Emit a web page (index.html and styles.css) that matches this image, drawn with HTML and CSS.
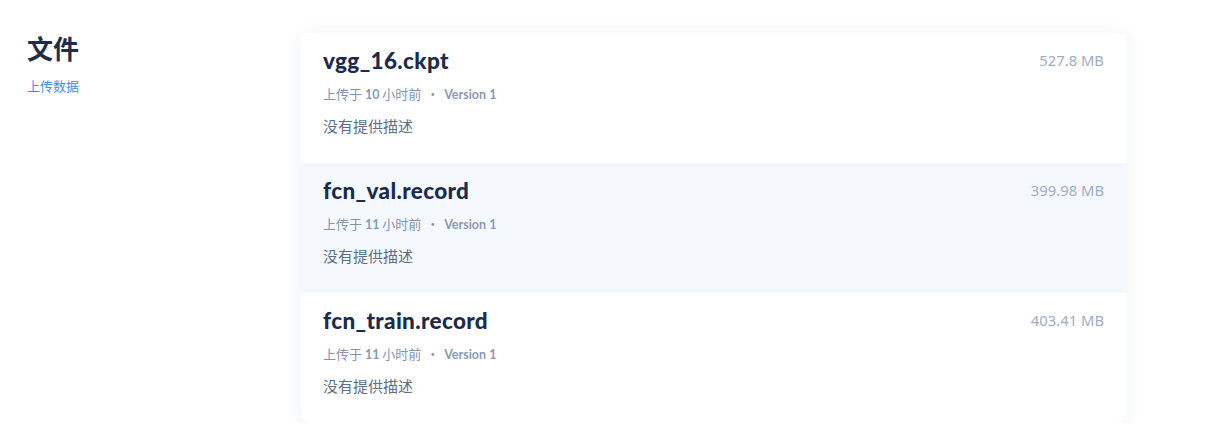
FILE: index.html
```html
<!DOCTYPE html>
<html lang="zh-CN">
<head>
<meta charset="utf-8">
<title>文件</title>
<link rel="stylesheet" href="styles.css">
</head>
<body>
<div class="page">
  <aside class="side">
    <h1 class="side-title">文件</h1>
    <a class="side-link" href="#">上传数据</a>
  </aside>
  <main class="card">
    <div class="row">
      <div class="row-head">
        <span class="name">vgg_16.ckpt</span>
        <span class="size">527.8 MB</span>
      </div>
      <div class="meta">上传于 <span class="lat">10</span> 小时前 <span class="dot">·</span> <span class="lat">Version 1</span></div>
      <div class="desc">没有提供描述</div>
    </div>
    <div class="row row-active">
      <div class="row-head">
        <span class="name">fcn_val.record</span>
        <span class="size">399.98 MB</span>
      </div>
      <div class="meta">上传于 <span class="lat">11</span> 小时前 <span class="dot">·</span> <span class="lat">Version 1</span></div>
      <div class="desc">没有提供描述</div>
    </div>
    <div class="row">
      <div class="row-head">
        <span class="name">fcn_train.record</span>
        <span class="size">403.41 MB</span>
      </div>
      <div class="meta">上传于 <span class="lat">11</span> 小时前 <span class="dot">·</span> <span class="lat">Version 1</span></div>
      <div class="desc">没有提供描述</div>
    </div>
  </main>
</div>
</body>
</html>
```
FILE: styles.css
```css
html, body {
  margin: 0;
  padding: 0;
  background: #ffffff;
}
body {
  font-family: "Noto Sans CJK SC", "Noto Sans", sans-serif;
  color: #1f2d4a;
}
.page {
  display: flex;
  align-items: flex-start;
  padding-top: 33px;
}
.side {
  width: 274px;
  padding-left: 27px;
  flex: none;
}
.side-title {
  margin: 0;
  font-size: 26px;
  line-height: 30px;
  font-weight: 700;
  color: #1f2d4a;
}
.side-link {
  display: block;
  margin-top: 13px;
  font-size: 13px;
  line-height: 20px;
  color: #3d8ef0;
  text-decoration: none;
}
.card {
  width: 825px;
  flex: none;
  background: #fff;
  border-radius: 0 0 10px 10px;
  box-shadow: 0 2px 18px rgba(30, 50, 90, 0.07);
  overflow: hidden;
}
.row {
  padding: 13px 22px 26px 22px;
  height: 91px;
}
.row-active {
  background: #f5f9fe;
}
.row-head {
  display: flex;
  justify-content: space-between;
  align-items: center;
  height: 28px;
}
.name {
  font-family: "Lato", "Noto Sans", sans-serif;
  font-weight: 900;
  font-size: 22.5px;
  color: #1c2b4b;
  letter-spacing: 0.35px;
}
.size {
  font-family: "Noto Sans", "Liberation Sans", sans-serif;
  font-size: 14.8px;
  color: #9cadc5;
}
.meta {
  margin-top: 10px;
  font-size: 13px;
  line-height: 20px;
  color: #8393ad;
}
.lat {
  font-family: "Lato", "Noto Sans", sans-serif;
  font-weight: 700;
  font-size: 12.5px;
  color: #8a9ab3;
}
.dot {
  padding: 0 2px;
}
.desc {
  margin-top: 11px;
  font-size: 15px;
  line-height: 20px;
  color: #5d6e87;
}
```
